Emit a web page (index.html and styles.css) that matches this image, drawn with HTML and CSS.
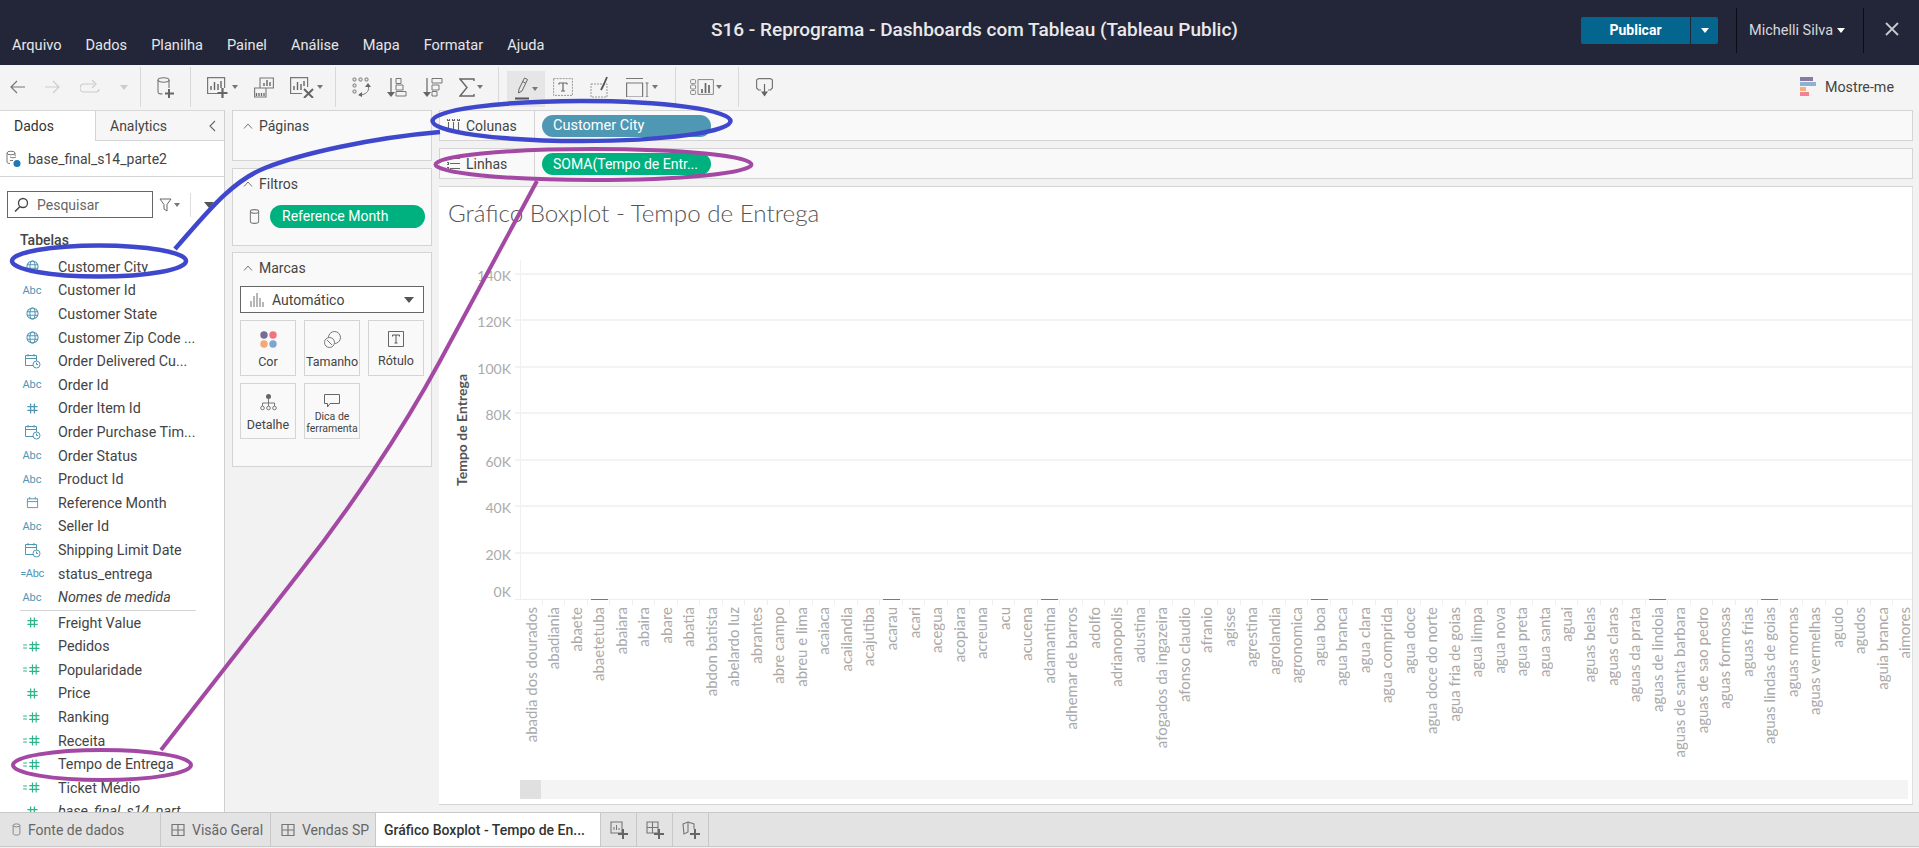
FILE: index.html
```html
<!DOCTYPE html>
<html lang="pt">
<head>
  <meta charset="UTF-8">
  <title>S16 - Reprograma - Dashboards com Tableau</title>
  <link rel="stylesheet" href="styles.css">
</head>
<body>
  <svg class="defs" width="0" height="0">
    <symbol id="globe" viewBox="0 0 14 14"><g fill="none" stroke="#4f96b4" stroke-width="1.1"><circle cx="7" cy="7" r="6"/><ellipse cx="7" cy="7" rx="2.8" ry="6"/><path d="M1 5h12M1 9h12"/></g></symbol>
    <symbol id="hash" viewBox="0 0 14 14"><path d="M5 1.500v11M9 1.500v11M1.500 5h11M1.500 9h11" fill="none" stroke="#2bb58c" stroke-width="1.300"/></symbol>
    <symbol id="calc-hash" viewBox="0 0 19 14"><path d="M0 5.500h4M0 8.500h4" stroke="#2bb58c" stroke-width="1.100"/><path d="M10 1.500v11M14 1.500v11M6.500 5h11M6.500 9h11" fill="none" stroke="#2bb58c" stroke-width="1.300"/></symbol>
    <symbol id="hash-blue" viewBox="0 0 14 14"><path d="M5 1.500v11M9 1.500v11M1.500 5h11M1.500 9h11" fill="none" stroke="#4f96b4" stroke-width="1.300"/></symbol>
    <symbol id="datetime" viewBox="0 0 17 16"><g fill="none" stroke="#4f96b4" stroke-width="1"><path d="M9 12.500H1.500v-10h11V8M1.500 5.500h11M4 1v2.500M10 1v2.500"/><circle cx="12.500" cy="11.500" r="3.500"/><path d="M12.500 9.500v2h1.500"/></g></symbol>
    <symbol id="date" viewBox="0 0 14 14"><path d="M1.500 3h11v9.500h-11zM1.500 6h11M4 1v2.500M10 1v2.500" fill="none" stroke="#4f96b4"/></symbol>
    <symbol id="db" viewBox="0 0 12 17"><g fill="none" stroke="#777" stroke-width="1.100"><ellipse cx="6" cy="3" rx="4.500" ry="2"/><path d="M1.500 3v11c0 1 2 2 4.500 2s4.500-1 4.500-2V3"/></g></symbol>
    <symbol id="sheet" viewBox="0 0 14 14"><path d="M1 1.500h12v11H1zM1 7h12M7 1.500v11" fill="none" stroke="#777" stroke-width="1.200"/></symbol>
    <symbol id="plus" viewBox="0 0 10 10"><path d="M5 0v10M0 5h10" stroke="#666" stroke-width="2"/></symbol>
  </svg>

  <header class="topbar">
    <nav class="menu">
      <span>Arquivo</span><span>Dados</span><span>Planilha</span><span>Painel</span><span>Análise</span><span>Mapa</span><span>Formatar</span><span>Ajuda</span>
    </nav>
    <div class="doc-title">S16 - Reprograma - Dashboards com Tableau (Tableau Public)</div>
    <div class="top-right">
      <div class="publish"><span class="publish-main">Publicar</span><span class="publish-more"><i class="caret caret-white"></i></span></div>
      <div class="user">Michelli Silva <i class="caret caret-white"></i></div>
      <svg class="close" width="14" height="14" viewBox="0 0 14 14"><path d="M1 1l12 12M13 1L1 13" stroke="#c8c9ce" stroke-width="1.800"/></svg>
    </div>
  </header>

  <div class="toolbar">
    <div class="tb-group tb-history">
      <svg width="15" height="14" viewBox="0 0 15 14"><path d="M15 7H1M7 1L1 7l6 6" fill="none" stroke="#777" stroke-width="1.200"/></svg>
      <svg width="15" height="14" viewBox="0 0 15 14"><path d="M0 7h14M8 1l6 6-6 6" fill="none" stroke="#ccc" stroke-width="1.200"/></svg>
      <svg width="20" height="14" viewBox="0 0 20 14"><path d="M14 4H4a3 3 0 0 0 0 8h12a3 3 0 0 0 3-3M12 0l4 4-4 4" fill="none" stroke="#ccc" stroke-width="1.200"/></svg>
      <i class="caret caret-light"></i>
    </div>
    <div class="tb-group tb-single">
      <svg width="17" height="21" viewBox="0 0 17 21"><g fill="none" stroke="#777" stroke-width="1.100"><ellipse cx="6.500" cy="3" rx="5.500" ry="2.200"/><path d="M1 3v12c0 1 1.500 2 4.500 2M12 3v8"/></g><path d="M12 12v9M8 16.500h9" stroke="#666" stroke-width="2"/></svg>
    </div>
    <div class="tb-group tb-charts">
      <span class="tool">
        <svg width="23" height="21" viewBox="0 0 23 21"><path d="M12 16.500H.6V.6h17V11" fill="none" stroke="#777" stroke-width="1.200"/><path d="M4 13V9M7.500 13V5M11 13V7M14 11V4" stroke="#666" stroke-width="1.400"/><path d="M15.500 11v10M10.500 16h10" stroke="#666" stroke-width="2.200"/></svg>
        <i class="caret"></i>
      </span>
      <svg width="20" height="21" viewBox="0 0 20 21"><g fill="none" stroke="#777" stroke-width="1.100"><path d="M6 1h13.400v10H6zM.6 11H12v9H.6z"/></g><path d="M10 9V6M13 9V3M16 9V5" stroke="#666" stroke-width="1.400"/><path d="M2.500 19v-3M5 19v-3M7.500 19v-3M10 19v-3" stroke="#666" stroke-width="1.300"/></svg>
      <span class="tool">
        <svg width="25" height="21" viewBox="0 0 25 21"><path d="M12 16.500H.6V.6h17V10" fill="none" stroke="#777" stroke-width="1.200"/><path d="M4 13V9M7.500 13V5M11 13V7M14 9V4" stroke="#666" stroke-width="1.400"/><path d="M14 12l9 9M23 12l-9 9" stroke="#666" stroke-width="2"/></svg>
        <i class="caret"></i>
      </span>
    </div>
    <div class="tb-group tb-data">
      <svg width="19" height="20" viewBox="0 0 19 20"><g fill="none" stroke="#777"><rect x="1" y="1" width="3" height="3" rx="1"/><rect x="7" y="1" width="3" height="3" rx="1"/><rect x="13" y="1" width="3" height="3" rx="1"/><rect x="1" y="7" width="3" height="3" rx="1"/><rect x="1" y="13" width="3" height="3" rx="1"/><path d="M16 8c2 5-1 9-7 10"/></g><path d="M13 10l3-4 3 4zM10 15l-4 3 4 2z" fill="#666"/></svg>
      <svg width="20" height="20" viewBox="0 0 20 20"><path d="M4 1v15" fill="none" stroke="#666" stroke-width="1.200"/><path d="M0 15h8l-4 5z" fill="#666"/><g fill="none" stroke="#777"><path d="M9 1.500h5v5H9zM9 8h7v5H9zM9 14.500h10v4.500H9z"/></g></svg>
      <svg width="20" height="20" viewBox="0 0 20 20"><path d="M4 1v15" fill="none" stroke="#666" stroke-width="1.200"/><path d="M0 15h8l-4 5z" fill="#666"/><g fill="none" stroke="#777"><path d="M9 1.500h10v4.500H9zM9 8h7v5H9zM9 14.500h5v4.500H9z"/></g></svg>
      <span class="tool">
        <svg width="16" height="19" viewBox="0 0 16 19"><path d="M15 3V1H1l7 8.500L1 18h14v-2" fill="none" stroke="#666" stroke-width="1.400"/></svg>
        <i class="caret"></i>
      </span>
    </div>
    <div class="tb-group tb-format">
      <span class="tool tool-active">
        <svg width="15" height="24" viewBox="0 0 15 24"><path d="M9.500 1l3 1.500L7 14l-3.500 2 .5-4zM7.500 4.500l3 1.500" fill="none" stroke="#666"/><path d="M0 21.500h14" stroke="#555" stroke-width="2"/></svg>
        <i class="caret"></i>
      </span>
      <svg width="20" height="18" viewBox="0 0 20 18"><path d="M.6.600h18.800v16.800H.600z" fill="none" stroke="#999" stroke-dasharray="2 1"/><path d="M6 5h8M10 5v8M8 13h4M6 5v1.500M14 5v1.500" fill="none" stroke="#666" stroke-width="1.200"/></svg>
      <svg width="19" height="22" viewBox="0 0 19 22"><path d="M1 8h16v13H1z" fill="none" stroke="#999" stroke-dasharray="2 1"/><path d="M17 1l-3 7-3 6" fill="none" stroke="#555" stroke-width="1.800"/></svg>
      <span class="tool">
        <svg width="24" height="20" viewBox="0 0 24 20"><path d="M.6 6h16v14H.6zM0 1.500h17" fill="none" stroke="#777" stroke-width="1.200"/><path d="M21 6v14M19.500 6h3M19.500 20h3" fill="none" stroke="#777"/></svg>
        <i class="caret"></i>
      </span>
    </div>
    <div class="tb-group tb-showme">
      <span class="tool">
        <svg width="24" height="16" viewBox="0 0 24 16"><g fill="none" stroke="#888"><rect x=".6" y=".6" width="5" height="4" rx="1"/><rect x=".6" y="6" width="5" height="4" rx="1"/><rect x=".6" y="11.500" width="5" height="4" rx="1"/><path d="M8 .6h15.400v14.800H8z"/></g><path d="M12 14v-4M15.500 14V4M19 14V6" stroke="#666" stroke-width="1.700"/></svg>
        <i class="caret"></i>
      </span>
    </div>
    <div class="tb-group tb-present">
      <svg width="17" height="19" viewBox="0 0 17 19"><path d="M5 12H2.500L.6 10V2L2.500.6h12L16.400 2v8L14.500 12H12" fill="none" stroke="#777" stroke-width="1.200"/><path d="M8.500 6v8" stroke="#666" stroke-width="1.200"/><path d="M5 13.500h7L8.500 18.500z" fill="#666"/></svg>
    </div>
    <div class="showme">
      <span class="showme-icon"><i class="b1"></i><i class="b2"></i><i class="b3"></i><i class="b4"></i></span>
      Mostre-me
    </div>
  </div>

  <main class="workspace">
    <aside class="side">
      <div class="side-tabs">
        <div class="side-tab side-tab-on">Dados</div>
        <div class="side-tab">Analytics <svg class="side-collapse" width="7" height="12" viewBox="0 0 7 12"><path d="M6 1L1 6l5 5" fill="none" stroke="#666" stroke-width="1.100"/></svg></div>
      </div>
      <div class="source">
        <svg width="15" height="18" viewBox="0 0 15 18"><g fill="none" stroke="#777"><ellipse cx="5" cy="3" rx="4" ry="1.800"/><path d="M1 3v9c0 1 1.500 1.500 3 1.500M9 3v3"/><path d="M4 7c2 1 4 1 6 0M4 10.500h3"/></g><circle cx="11" cy="13.500" r="3.500" fill="#1f77b4"/></svg>
        base_final_s14_parte2
      </div>
      <div class="search-row">
        <div class="search">
          <svg width="15" height="15" viewBox="0 0 15 15"><circle cx="9" cy="6" r="4.500" fill="none" stroke="#444" stroke-width="1.300"/><path d="M6 9.500L1 14.500" stroke="#444" stroke-width="1.500"/></svg>
          Pesquisar
        </div>
        <svg class="funnel" width="13" height="14" viewBox="0 0 13 14"><path d="M1 1h11L8 6.500V13L5 11V6.500z" fill="none" stroke="#666"/></svg>
        <i class="caret"></i>
        <span class="search-sep"></span>
        <i class="caret caret-big"></i>
      </div>
      <div class="tables-head">Tabelas</div>
      <ul class="fields">
        <li><span class="ficon"><svg width="13" height="13"><use href="#globe"/></svg></span>Customer City</li>
        <li><span class="ficon abc">Abc</span>Customer Id</li>
        <li><span class="ficon"><svg width="13" height="13"><use href="#globe"/></svg></span>Customer State</li>
        <li><span class="ficon"><svg width="13" height="13"><use href="#globe"/></svg></span>Customer Zip Code ...</li>
        <li><span class="ficon"><svg width="17" height="16"><use href="#datetime"/></svg></span>Order Delivered Cu...</li>
        <li><span class="ficon abc">Abc</span>Order Id</li>
        <li><span class="ficon"><svg width="13" height="13"><use href="#hash-blue"/></svg></span>Order Item Id</li>
        <li><span class="ficon"><svg width="17" height="16"><use href="#datetime"/></svg></span>Order Purchase Tim...</li>
        <li><span class="ficon abc">Abc</span>Order Status</li>
        <li><span class="ficon abc">Abc</span>Product Id</li>
        <li><span class="ficon"><svg width="13" height="13"><use href="#date"/></svg></span>Reference Month</li>
        <li><span class="ficon abc">Abc</span>Seller Id</li>
        <li><span class="ficon"><svg width="17" height="16"><use href="#datetime"/></svg></span>Shipping Limit Date</li>
        <li><span class="ficon abc abc-calc">=Abc</span>status_entrega</li>
        <li class="field-generated"><span class="ficon abc">Abc</span>Nomes de medida</li>
        <li class="field-rule"></li>
        <li><span class="ficon"><svg width="13" height="13"><use href="#hash"/></svg></span>Freight Value</li>
        <li><span class="ficon ficon-calc"><svg width="18" height="13"><use href="#calc-hash"/></svg></span>Pedidos</li>
        <li><span class="ficon ficon-calc"><svg width="18" height="13"><use href="#calc-hash"/></svg></span>Popularidade</li>
        <li><span class="ficon"><svg width="13" height="13"><use href="#hash"/></svg></span>Price</li>
        <li><span class="ficon ficon-calc"><svg width="18" height="13"><use href="#calc-hash"/></svg></span>Ranking</li>
        <li><span class="ficon ficon-calc"><svg width="18" height="13"><use href="#calc-hash"/></svg></span>Receita</li>
        <li><span class="ficon ficon-calc"><svg width="18" height="13"><use href="#calc-hash"/></svg></span>Tempo de Entrega</li>
        <li><span class="ficon ficon-calc"><svg width="18" height="13"><use href="#calc-hash"/></svg></span>Ticket Médio</li>
        <li class="field-generated"><span class="ficon"><svg width="13" height="13"><use href="#hash"/></svg></span>base_final_s14_part...</li>
      </ul>
    </aside>

    <section class="cards">
      <div class="card card-pages">
        <div class="card-head"><svg class="chev" width="10" height="6" viewBox="0 0 10 6"><path d="M1 5.500l4-4.500 4 4.500" fill="none" stroke="#777"/></svg>Páginas</div>
      </div>
      <div class="card card-filters">
        <div class="card-head"><svg class="chev" width="10" height="6" viewBox="0 0 10 6"><path d="M1 5.500l4-4.500 4 4.500" fill="none" stroke="#777"/></svg>Filtros</div>
        <div class="filter-row">
          <svg width="11" height="17"><use href="#db"/></svg>
          <span class="pill pill-green pill-filter">Reference Month</span>
        </div>
      </div>
      <div class="card card-marks">
        <div class="card-head"><svg class="chev" width="10" height="6" viewBox="0 0 10 6"><path d="M1 5.500l4-4.500 4 4.500" fill="none" stroke="#777"/></svg>Marcas</div>
        <div class="mark-select">
          <svg width="14" height="14" viewBox="0 0 14 14"><path d="M1 14V8M4 14V3M7 14V0M10 14V5M13 14V9" stroke="#888" stroke-width="1.200"/></svg>
          <span>Automático</span>
          <i class="caret caret-big"></i>
        </div>
        <div class="mark-grid">
          <div class="mark-btn">
            <svg width="17" height="17" viewBox="0 0 17 17"><circle cx="4" cy="4" r="3.700" fill="#7b6a96"/><circle cx="13" cy="4" r="3.700" fill="#f2727f"/><circle cx="4" cy="13" r="3.700" fill="#f3a875"/><circle cx="13" cy="13" r="3.700" fill="#7ca6d0"/></svg>
            Cor
          </div>
          <div class="mark-btn">
            <svg width="17" height="17" viewBox="0 0 17 17"><g fill="none" stroke="#777"><circle cx="10.500" cy="6.500" r="6"/><circle cx="5.500" cy="11.500" r="5" fill="#f9f9f9"/><path d="M3 9l5 5"/></g></svg>
            Tamanho
          </div>
          <div class="mark-btn">
            <svg width="16" height="16" viewBox="0 0 16 16"><path d="M.5.500h15v15H.500z" fill="none" stroke="#666"/><path d="M4.500 5.500V4h7v1.500M8 4v8M6.500 12h3" fill="none" stroke="#555"/></svg>
            Rótulo
          </div>
          <div class="mark-btn">
            <svg width="17" height="17" viewBox="0 0 17 17"><circle cx="8.500" cy="2.500" r="2.500" fill="#666"/><g fill="none" stroke="#777"><path d="M8.500 5v7M2.500 12V9h12v3"/><circle cx="2.500" cy="14" r="1.800"/><circle cx="8.500" cy="14" r="1.800"/><circle cx="14.500" cy="14" r="1.800"/></g></svg>
            Detalhe
          </div>
          <div class="mark-btn mark-btn-small">
            <svg width="16" height="14" viewBox="0 0 16 14"><path d="M.5.500h15v9H6L3.500 13V9.500h-3z" fill="none" stroke="#666"/></svg>
            <span>Dica de ferramenta</span>
          </div>
        </div>
      </div>
    </section>

    <section class="view">
      <div class="shelf">
        <div class="shelf-label">
          <svg width="13" height="13" viewBox="0 0 13 13"><path d="M1.500 3v10M6.500 3v10M11.500 3v10M.5 0v1.500h2V0M5.500 0v1.500h2V0M10.500 0v1.500h2V0" fill="none" stroke="#666" stroke-width="1.100"/></svg>
          Colunas
        </div>
        <span class="pill pill-blue">Customer City</span>
      </div>
      <div class="shelf">
        <div class="shelf-label">
          <svg width="13" height="13" viewBox="0 0 13 13"><path d="M3 1.500h10M3 6.500h10M3 11.500h10M0 .5h1.500v2H0M0 5.500h1.500v2H0M0 10.500h1.500v2H0" fill="none" stroke="#666" stroke-width="1.100"/></svg>
          Linhas
        </div>
        <span class="pill pill-green">SOMA(Tempo de Entr...</span>
      </div>

      <div class="chart-card">
        <h1 class="chart-title">Gráfico Boxplot - Tempo de Entrega</h1>
        <div class="chart-body">
          <div class="y-title"><span>Tempo de Entrega</span></div>
          <div class="y-labels">
            <span>140K</span><span>120K</span><span>100K</span><span>80K</span><span>60K</span><span>40K</span><span>20K</span><span class="y-zero">0K</span>
          </div>
          <div class="plot">
            <div class="grid-line"></div><div class="grid-line"></div><div class="grid-line"></div><div class="grid-line"></div><div class="grid-line"></div><div class="grid-line"></div><div class="grid-line"></div>
          </div>
          <div class="x-axis">
            <div class="x-col"><span>abadia dos dourados</span></div>
            <div class="x-col"><span>abadiania</span></div>
            <div class="x-col"><span>abaete</span></div>
            <div class="x-col has-bar"><span>abaetetuba</span></div>
            <div class="x-col"><span>abaiara</span></div>
            <div class="x-col"><span>abaira</span></div>
            <div class="x-col"><span>abare</span></div>
            <div class="x-col"><span>abatia</span></div>
            <div class="x-col"><span>abdon batista</span></div>
            <div class="x-col"><span>abelardo luz</span></div>
            <div class="x-col"><span>abrantes</span></div>
            <div class="x-col"><span>abre campo</span></div>
            <div class="x-col"><span>abreu e lima</span></div>
            <div class="x-col"><span>acaiaca</span></div>
            <div class="x-col"><span>acailandia</span></div>
            <div class="x-col"><span>acajutiba</span></div>
            <div class="x-col has-bar"><span>acarau</span></div>
            <div class="x-col"><span>acari</span></div>
            <div class="x-col"><span>acegua</span></div>
            <div class="x-col"><span>acopiara</span></div>
            <div class="x-col"><span>acreuna</span></div>
            <div class="x-col"><span>acu</span></div>
            <div class="x-col"><span>acucena</span></div>
            <div class="x-col has-bar"><span>adamantina</span></div>
            <div class="x-col"><span>adhemar de barros</span></div>
            <div class="x-col"><span>adolfo</span></div>
            <div class="x-col"><span>adrianopolis</span></div>
            <div class="x-col"><span>adustina</span></div>
            <div class="x-col"><span>afogados da ingazeira</span></div>
            <div class="x-col"><span>afonso claudio</span></div>
            <div class="x-col"><span>afranio</span></div>
            <div class="x-col"><span>agisse</span></div>
            <div class="x-col"><span>agrestina</span></div>
            <div class="x-col"><span>agrolandia</span></div>
            <div class="x-col"><span>agronomica</span></div>
            <div class="x-col has-bar"><span>agua boa</span></div>
            <div class="x-col"><span>agua branca</span></div>
            <div class="x-col"><span>agua clara</span></div>
            <div class="x-col"><span>agua comprida</span></div>
            <div class="x-col"><span>agua doce</span></div>
            <div class="x-col"><span>agua doce do norte</span></div>
            <div class="x-col"><span>agua fria de goias</span></div>
            <div class="x-col"><span>agua limpa</span></div>
            <div class="x-col"><span>agua nova</span></div>
            <div class="x-col"><span>agua preta</span></div>
            <div class="x-col"><span>agua santa</span></div>
            <div class="x-col"><span>aguai</span></div>
            <div class="x-col"><span>aguas belas</span></div>
            <div class="x-col"><span>aguas claras</span></div>
            <div class="x-col"><span>aguas da prata</span></div>
            <div class="x-col has-bar"><span>aguas de lindoia</span></div>
            <div class="x-col"><span>aguas de santa barbara</span></div>
            <div class="x-col"><span>aguas de sao pedro</span></div>
            <div class="x-col"><span>aguas formosas</span></div>
            <div class="x-col"><span>aguas frias</span></div>
            <div class="x-col has-bar"><span>aguas lindas de goias</span></div>
            <div class="x-col"><span>aguas mornas</span></div>
            <div class="x-col"><span>aguas vermelhas</span></div>
            <div class="x-col"><span>agudo</span></div>
            <div class="x-col"><span>agudos</span></div>
            <div class="x-col"><span>aguia branca</span></div>
            <div class="x-col"><span>aimores</span></div>
          </div>
          <div class="h-scroll"><div class="h-thumb"></div></div>
        </div>
      </div>
    </section>
  </main>

  <footer class="tabbar">
    <div class="tab tab-source"><svg width="9" height="13"><use href="#db"/></svg>Fonte de dados</div>
    <div class="tab tab-sheet"><svg width="14" height="14"><use href="#sheet"/></svg>Visão Geral</div>
    <div class="tab tab-sheet"><svg width="14" height="14"><use href="#sheet"/></svg>Vendas SP</div>
    <div class="tab tab-active">Gráfico Boxplot - Tempo de En...</div>
    <div class="tab tab-new">
      <svg width="18" height="18" viewBox="0 0 18 18"><path d="M1 1h11v11H1z" fill="none" stroke="#777" stroke-width="1.100"/><path d="M4 9V6M6.500 9V4M9 9V7" stroke="#777"/><use href="#plus" x="8" y="8" width="10" height="10"/></svg>
    </div>
    <div class="tab tab-new">
      <svg width="18" height="18" viewBox="0 0 18 18"><path d="M1 1h11v11H1zM1 6.500h11M6.500 1v11" fill="none" stroke="#777" stroke-width="1.100"/><use href="#plus" x="8" y="8" width="10" height="10"/></svg>
    </div>
    <div class="tab tab-new">
      <svg width="18" height="18" viewBox="0 0 18 18"><path d="M1 3l5-2v10l-4 2zM6 1l6 2v5" fill="none" stroke="#777" stroke-width="1.100"/><use href="#plus" x="8" y="8" width="10" height="10"/></svg>
    </div>
  </footer>

  <!-- marcacoes feitas a mao por cima do print -->
  <svg class="scribbles" width="1919" height="848" viewBox="0 0 1919 848">
    <g fill="none" stroke="#3f48cc" stroke-width="4.500">
      <ellipse cx="581.500" cy="121" rx="149" ry="20"/>
      <ellipse cx="99" cy="261" rx="87" ry="15.500"/>
      <path d="M175 249C205 215 230 182 265 168S370 138 440 132"/>
    </g>
    <g fill="none" stroke="#a349a4" stroke-width="4">
      <ellipse cx="593.500" cy="164.500" rx="158" ry="15.500"/>
      <ellipse cx="102" cy="765" rx="89" ry="15"/>
      <path d="M161 750L300 572C345 515 400 435 440 361L537 181"/>
    </g>
  </svg>
</body>
</html>
```

FILE: styles.css
```css
* {
  box-sizing: border-box;
}
html, body {
  margin: 0;
  height: 100%;
}
body {
  position: relative;
  width: 1919px;
  height: 848px;
  overflow: hidden;
  font-family: Roboto, "Liberation Sans", sans-serif;
  font-size: 14px;
  color: #444;
  background: #f2f2f2;
}
.defs {
  position: absolute;
}
.caret {
  display: inline-block;
  width: 0;
  height: 0;
  border-left: 3px solid transparent;
  border-right: 3px solid transparent;
  border-top: 4px solid #777;
}
.caret-white {
  border-top-color: #fff;
  border-left-width: 4px;
  border-right-width: 4px;
  border-top-width: 5px;
}
.caret-light {
  border-top-color: #ccc;
  border-left-width: 4px;
  border-right-width: 4px;
  border-top-width: 5px;
}
.caret-big {
  border-top-color: #555;
  border-left-width: 5px;
  border-right-width: 5px;
  border-top-width: 6px;
}

/* barra escura */
.topbar {
  display: flex;
  height: 65px;
  background: #232638;
  color: #fff;
}
.menu {
  flex: 0 0 711px;
  display: flex;
  gap: 24px;
  padding: 36px 0 0 12px;
  font-size: 14.600px;
  color: #e6e6e8;
}
.doc-title {
  padding-top: 18px;
  font-size: 19px;
  font-weight: 500;
  color: #e9e9eb;
}
.top-right {
  margin-left: auto;
  display: flex;
  align-items: flex-start;
}
.publish {
  display: flex;
  gap: 1px;
  margin-top: 17px;
  height: 27px;
  font-size: 14px;
  font-weight: 700;
}
.publish-main {
  width: 109px;
  line-height: 27px;
  text-align: center;
  background: #04658f;
  border-radius: 2px 0 0 2px;
}
.publish-more {
  width: 27px;
  display: flex;
  align-items: center;
  justify-content: center;
  background: #04658f;
  border-radius: 0 2px 2px 0;
}
.user {
  margin: 8px 0 0 18px;
  width: 128px;
  height: 45px;
  padding-left: 12px;
  line-height: 45px;
  border-left: 1px solid #0c0d14;
  border-right: 1px solid #0c0d14;
  font-size: 14.500px;
  color: #d8d8da;
}
.user .caret {
  vertical-align: 2px;
}
.close {
  margin: 22px 20px 0 21px;
}

/* barra de ferramentas */
.toolbar {
  display: flex;
  height: 45px;
  padding: 2px 0 3px;
  background: #f4f4f4;
}
.tb-group {
  display: flex;
  align-items: center;
  border-right: 1px solid #d8d8d8;
}
.tool {
  display: flex;
  align-items: center;
  gap: 2px;
}
.tool-active {
  align-self: flex-start;
  width: 38px;
  height: 36px;
  margin-top: 4px;
  margin-right: -9px;
  padding-left: 8px;
  background: #e6e6e6;
}
.tb-history {
  width: 141px;
  padding-left: 10px;
  gap: 20px;
}
.tb-single {
  width: 50px;
  padding-left: 16px;
}
.tb-charts {
  width: 145px;
  padding-left: 16px;
  gap: 16px;
}
.tb-data {
  width: 163px;
  padding-left: 16px;
  gap: 16px;
}
.tb-format {
  width: 177px;
  padding-left: 8px;
  gap: 17px;
}
.tb-showme {
  width: 63px;
  padding-left: 14px;
}
.tb-present {
  border-right: 0;
  padding-left: 17px;
}
.showme {
  margin-left: auto;
  display: flex;
  align-items: center;
  gap: 9px;
  padding-right: 25px;
  font-size: 14.300px;
  color: #444;
}
.showme-icon {
  display: flex;
  flex-direction: column;
  width: 16px;
}
.showme-icon i {
  display: block;
  height: 4px;
  margin-bottom: 1px;
}
.showme-icon .b1 { width: 13px; background: #8a7aa0; }
.showme-icon .b2 { width: 16px; background: #8fb0d4; }
.showme-icon .b3 { width: 6px; background: #f3b07e; }
.showme-icon .b4 { width: 9px; background: #f5838f; }

/* area principal */
.workspace {
  display: flex;
  height: 702px;
}
.side {
  flex: 0 0 225px;
  height: 702px;
  overflow: hidden;
  background: #fff;
  border-top: 1px solid #d8d8d8;
  border-right: 1px solid #cfcfcf;
}
.side-tabs {
  display: flex;
  height: 30px;
}
.side-tab {
  position: relative;
  padding: 5px 0 0 14px;
  font-size: 14px;
  line-height: 20px;
  flex: 1;
  background: #f6f6f6;
  border-left: 1px solid #d4d4d4;
  border-bottom: 1px solid #d4d4d4;
}
.side-tab-on {
  flex: 0 0 95px;
  background: #fff;
  border: 0;
  color: #333;
}
.side-collapse {
  position: absolute;
  right: 8px;
  top: 9px;
}
.source {
  display: flex;
  align-items: center;
  gap: 7px;
  height: 36px;
  padding-left: 6px;
  border-bottom: 1px solid #d4d4d4;
  font-size: 14px;
  color: #444;
}
.search-row {
  display: flex;
  align-items: center;
  margin: 14px 0 0 7px;
}
.search {
  display: flex;
  align-items: center;
  gap: 8px;
  width: 146px;
  height: 27px;
  padding-left: 6px;
  border: 1px solid #666;
  font-size: 14px;
  color: #666;
}
.funnel {
  margin: 0 2px 0 6px;
}
.search-sep {
  width: 1px;
  height: 24px;
  margin: 0 13px 0 10px;
  background: #ddd;
}
.tables-head {
  margin: 12px 0 0 20px;
  height: 24px;
  line-height: 20px;
  font-size: 14px;
  font-weight: 500;
  color: #444;
}
.fields {
  list-style: none;
  margin: 1px 0 0;
  padding: 0;
}
.fields li {
  display: flex;
  align-items: center;
  height: 23.6px;
  padding-left: 20px;
  white-space: nowrap;
  font-size: 14.300px;
  color: #444;
}
.fields .field-generated {
  font-style: italic;
}
.fields .field-rule {
  height: 1px;
  margin: 1px 28px 0 0;
  padding: 0;
  margin-left: 20px;
  background: #d4d4d4;
}
.ficon {
  display: flex;
  align-items: center;
  justify-content: center;
  flex: 0 0 24px;
  margin-right: 14px;
}
.ficon-calc {
  justify-content: flex-end;
  transform: translateX(-3px);
}
.fields .abc {
  font-size: 11px;
  font-style: normal;
  color: #4f96b4;
}
.fields .abc-calc {
  letter-spacing: -0.4px;
}

/* paginas, filtros, marcas */
.cards {
  flex: 0 0 214px;
  display: flex;
  flex-direction: column;
  padding-left: 7px;
}
.card {
  width: 200px;
  background: #f9f9f9;
  border: 1px solid #d4d4d4;
}
.card-pages {
  height: 51px;
}
.card-filters {
  height: 78px;
  margin-top: 7px;
}
.card-marks {
  height: 215px;
  margin-top: 6px;
  padding: 0 7px;
}
.card-head {
  display: flex;
  align-items: center;
  height: 30px;
  padding-left: 26px;
  position: relative;
  font-size: 14px;
  color: #444;
}
.card-marks .card-head {
  padding-left: 19px;
}
.chev {
  position: absolute;
  left: 10px;
  top: 12px;
}
.card-marks .chev {
  left: 3px;
}
.filter-row {
  display: flex;
  align-items: center;
  gap: 10px;
  margin-top: 6px;
  padding-left: 16px;
}
.pill {
  display: block;
  border-radius: 12px;
  color: #fff;
  font-size: 14px;
  white-space: nowrap;
}
.pill-green {
  background: #00b180;
}
.shelf .pill-blue {
  background: #4e98b4;
  font-size: 14.500px;
}
.pill-filter {
  width: 155px;
  height: 23px;
  padding-left: 12px;
  line-height: 23px;
}
.mark-select {
  display: flex;
  align-items: center;
  gap: 8px;
  width: 184px;
  height: 27px;
  margin-top: 3px;
  padding: 0 9px;
  background: #fff;
  border: 1px solid #666;
  font-size: 14px;
}
.mark-select .caret {
  margin-left: auto;
}
.mark-grid {
  display: grid;
  grid-template-columns: repeat(3, 56px);
  grid-auto-rows: 56px;
  gap: 7px 8px;
  margin-top: 7px;
}
.mark-btn {
  display: flex;
  flex-direction: column;
  align-items: center;
  gap: 6px;
  padding-top: 10px;
  border: 1px solid #d4d4d4;
  font-size: 12.500px;
  white-space: nowrap;
  color: #444;
}
.mark-btn-small {
  gap: 3px;
  font-size: 10.5px;
  line-height: 12px;
  text-align: center;
  white-space: normal;
}

/* prateleiras e grafico */
.view {
  flex: 1;
  display: flex;
  flex-direction: column;
  gap: 7px;
  padding-right: 6px;
}
.shelf {
  display: flex;
  align-items: center;
  height: 31px;
  background: #f9f9f9;
  border: 1px solid #d4d4d4;
}
.shelf-label {
  display: flex;
  align-items: center;
  gap: 6px;
  flex: 0 0 95px;
  height: 100%;
  padding-left: 7px;
  margin-right: 7px;
  border-right: 1px solid #d4d4d4;
  font-size: 14px;
}
.shelf .pill {
  width: 169px;
  height: 22px;
  padding-left: 11px;
  line-height: 22px;
}
.chart-card {
  flex: 1;
  margin-bottom: 7px;
  background: #fff;
  border-top: 1px solid #d4d4d4;
  border-right: 1px solid #e0e0e0;
  border-bottom: 1px solid #d4d4d4;
}
.chart-title {
  margin: 0;
  height: 73px;
  padding: 11px 0 0 9px;
  font-family: Lato, "Liberation Sans", sans-serif;
  font-size: 24.200px;
  font-weight: 300;
  color: #555;
}
.chart-body {
  display: grid;
  grid-template-columns: 76px 1fr;
  grid-template-rows: 340px 180px 19px;
}
.y-labels {
  grid-column: 1;
  grid-row: 1;
  display: flex;
  flex-direction: column;
  margin-top: -7px;
  padding-right: 4px;
  font-family: Lato, "Liberation Sans", sans-serif;
  font-size: 14px;
  color: #aaa;
  text-align: right;
}
.y-labels span {
  height: 46.430px;
  line-height: 46.430px;
}
.y-labels .y-zero {
  height: 27px;
  line-height: 27px;
}
.y-title {
  grid-column: 1;
  grid-row: 1;
  display: flex;
  align-items: center;
  padding-left: 14px;
}
.y-title span {
  writing-mode: vertical-rl;
  transform: rotate(180deg);
  font-family: Lato, "Liberation Sans", sans-serif;
  font-size: 14px;
  font-weight: 700;
  color: #555;
}
.plot {
  grid-column: 2;
  grid-row: 1;
  position: relative;
  padding-top: 13px;
  border-bottom: 1px solid #eee;
}
.plot::before {
  content: "";
  position: absolute;
  left: 5px;
  top: 0;
  bottom: 0;
  width: 1px;
  background: #f0f0f0;
}
.grid-line {
  height: 46.430px;
  border-top: 2px solid #f3f3f3;
}
.x-axis {
  grid-column: 2;
  grid-row: 2;
  display: flex;
  height: 182px;
  margin-top: -2px;
  padding: 2px 0 0 5px;
  overflow: hidden;
}
.x-col {
  position: relative;
  flex: 0 0 22.520px;
  display: flex;
  justify-content: center;
  align-items: flex-start;
  padding-top: 7px;
  background: linear-gradient(#eee, #eee) right top / 1px 5px no-repeat;
}
.x-col span {
  writing-mode: vertical-rl;
  transform: rotate(180deg);
  white-space: nowrap;
  line-height: 1;
  font-family: Lato, "Liberation Sans", sans-serif;
  font-size: 15px;
  color: #aaa;
}
.h-scroll {
  grid-column: 2;
  grid-row: 3;
  margin: 0 4px 0 5px;
  background: #f4f4f4;
}
.h-thumb {
  width: 21px;
  height: 100%;
  background: #e0e0e0;
}
.has-bar::before {
  content: "";
  position: absolute;
  left: 3px;
  top: -1px;
  width: 17px;
  height: 1px;
  background: #5a80a8;
}

/* abas de baixo */
.tabbar {
  display: flex;
  height: 35px;
  background: #e3e3e3;
  border-top: 1px solid #c8c8c8;
  border-bottom: 1px solid #c8c8c8;
}
.tab {
  display: flex;
  align-items: center;
  gap: 7px;
  border-right: 1px solid #c8c8c8;
  font-size: 14px;
  color: #666;
}
.tab-source {
  width: 161px;
  padding-left: 12px;
}
.tab-sheet {
  padding-left: 10px;
}
.tab-sheet:nth-child(2) {
  width: 110px;
}
.tab-sheet:nth-child(3) {
  width: 105px;
}
.tab-active {
  width: 225px;
  padding-left: 8px;
  background: #fff;
  font-weight: 500;
  color: #333;
}
.tab-new {
  width: 36px;
  justify-content: center;
}

/* marcacoes */
.scribbles {
  position: absolute;
  left: 0;
  top: 0;
  pointer-events: none;
}
```
